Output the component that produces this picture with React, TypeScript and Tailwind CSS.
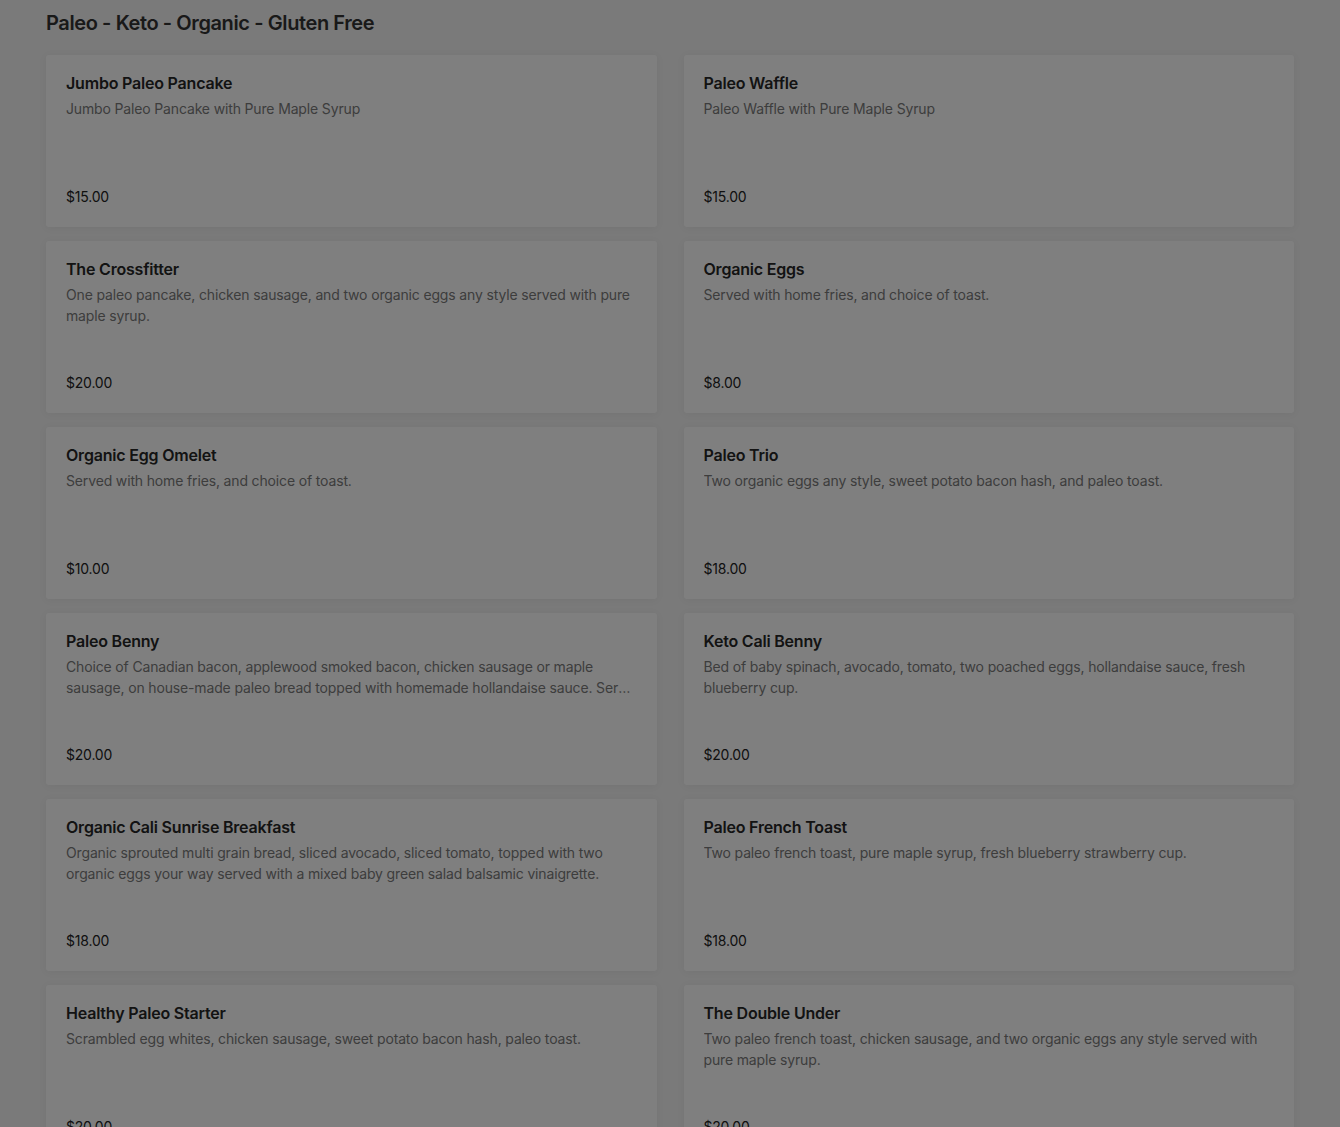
type Item = { name: string; desc: string; price: string; split?: [string, string] };

const items: Item[] = [
  { name: "Jumbo Paleo Pancake", desc: "Jumbo Paleo Pancake with Pure Maple Syrup", price: "$15.00" },
  { name: "Paleo Waffle", desc: "Paleo Waffle with Pure Maple Syrup", price: "$15.00" },
  { name: "The Crossfitter", desc: "One paleo pancake, chicken sausage, and two organic eggs any style served with pure maple syrup.", price: "$20.00" },
  { name: "Organic Eggs", desc: "Served with home fries, and choice of toast.", price: "$8.00" },
  { name: "Organic Egg Omelet", desc: "Served with home fries, and choice of toast.", price: "$10.00" },
  { name: "Paleo Trio", desc: "Two organic eggs any style, sweet potato bacon hash, and paleo toast.", price: "$18.00" },
  {
    name: "Paleo Benny",
    desc: "Choice of Canadian bacon, applewood smoked bacon, chicken sausage or maple sausage, on house-made paleo bread topped with homemade hollandaise sauce. Served with home fries and a fresh fruit cup.",
    price: "$20.00",
    // second line gets cut mid-word, like the live site does
    split: [
      "Choice of Canadian bacon, applewood smoked bacon, chicken sausage or maple",
      "sausage, on house-made paleo bread topped with homemade hollandaise sauce. Served with home fries and a fresh fruit cup.",
    ],
  },
  { name: "Keto Cali Benny", desc: "Bed of baby spinach, avocado, tomato, two poached eggs, hollandaise sauce, fresh blueberry cup.", price: "$20.00" },
  { name: "Organic Cali Sunrise Breakfast", desc: "Organic sprouted multi grain bread, sliced avocado, sliced tomato, topped with two organic eggs your way served with a mixed baby green salad balsamic vinaigrette.", price: "$18.00" },
  { name: "Paleo French Toast", desc: "Two paleo french toast, pure maple syrup, fresh blueberry strawberry cup.", price: "$18.00" },
  { name: "Healthy Paleo Starter", desc: "Scrambled egg whites, chicken sausage, sweet potato bacon hash, paleo toast.", price: "$20.00" },
  { name: "The Double Under", desc: "Two paleo french toast, chicken sausage, and two organic eggs any style served with pure maple syrup.", price: "$20.00" },
];

const MenuCard = ({ name, desc, price, split }: Item) => {
  return (
    <div className="h-[172px] bg-white rounded-[3px] shadow-[0_1px_8px_rgba(0,0,0,0.05)] px-5 pt-4 pb-5 flex flex-col">
      <h3 className="text-[16px] leading-6 font-semibold tracking-[-0.2px] text-[#262626]">{name}</h3>
      {split ? (
        <div className="mt-[3px] text-[14px] leading-[21px] tracking-[-0.15px] text-[#7a7a7a]">
          <p className="truncate">{split[0]}</p>
          <p className="truncate">{split[1]}</p>
        </div>
      ) : (
        <p className="mt-[3px] text-[14px] leading-[21px] tracking-[-0.15px] text-[#7a7a7a] line-clamp-2">{desc}</p>
      )}
      <div className="mt-auto text-[14px] leading-5 tracking-[-0.2px] text-[#222]">{price}</div>
    </div>
  );
};

export default function App() {
  return (
    <div className="relative min-h-screen bg-[#f4f4f4] font-['Inter',sans-serif]">
      <div className="px-[46px] pt-[10px] pb-10">
        <h2 className="text-[20px] leading-[26px] font-semibold tracking-[-0.4px] text-[#333]">Paleo - Keto - Organic - Gluten Free</h2>
        <div className="mt-[19px] grid grid-cols-2 gap-x-[27px] gap-y-[14px]">
          {items.map((it) => (
            <MenuCard key={it.name} {...it} />
          ))}
        </div>
      </div>
      <div className="fixed inset-0 bg-black/50" />
    </div>
  );
}
